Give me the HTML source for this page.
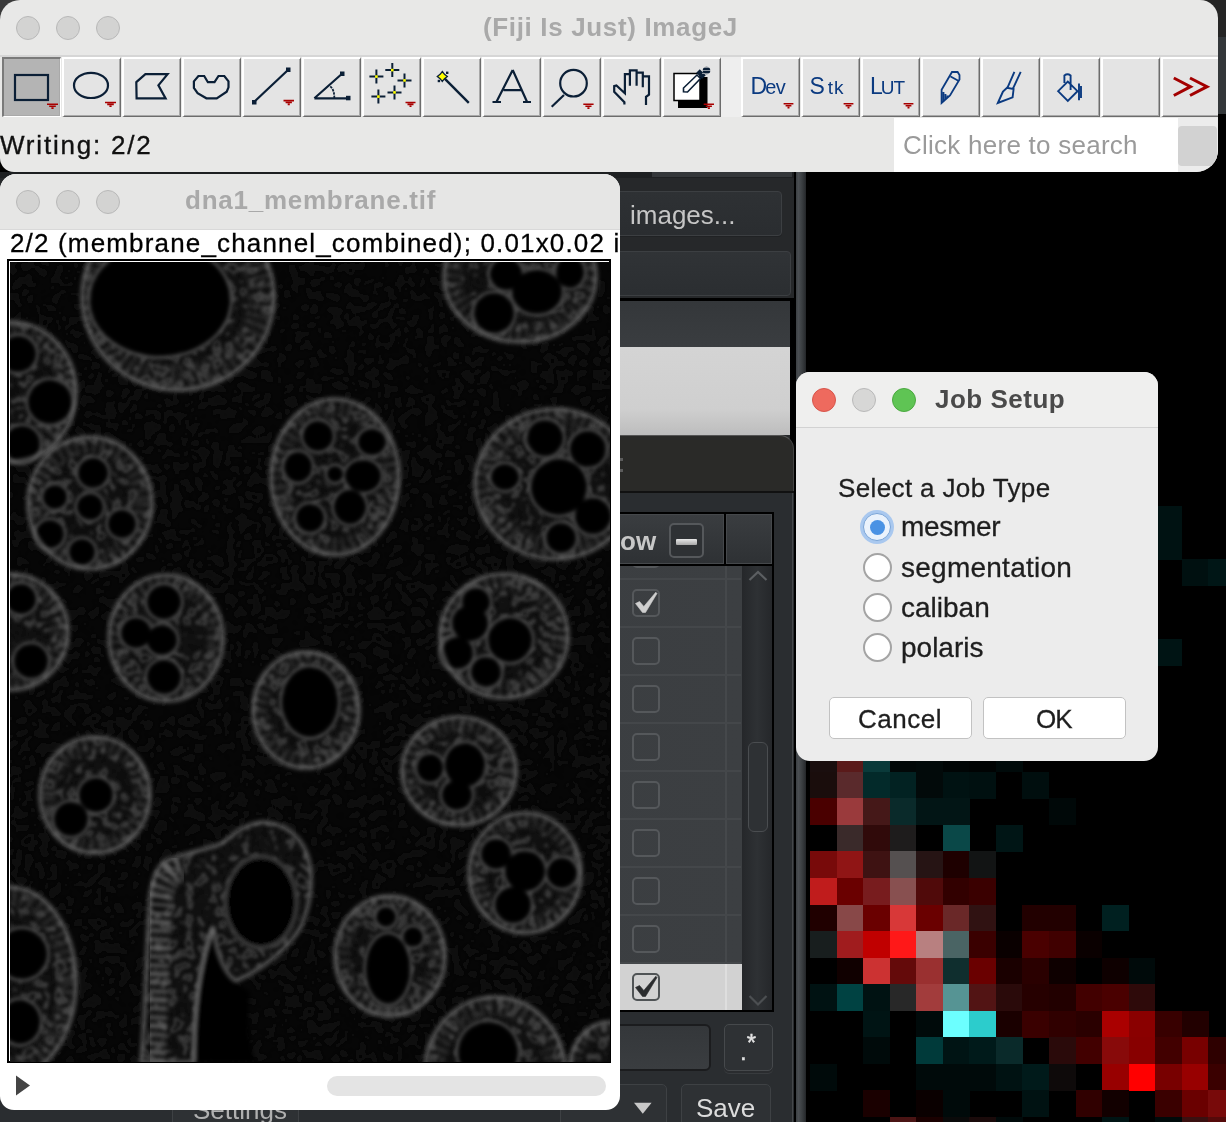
<!DOCTYPE html>
<html><head><meta charset="utf-8">
<style>
*{margin:0;padding:0;box-sizing:border-box}
body div{will-change:transform}
html,body{width:1226px;height:1122px;overflow:hidden;background:#000;font-family:"Liberation Sans",sans-serif}
.a{position:absolute}
.tb{position:absolute;top:57px;width:59px;height:60px;background:#e4e4e4;border-top:2.5px solid #fff;border-left:2px solid #fff;border-right:1px solid #6c6c6c;border-bottom:1px solid #6c6c6c;box-shadow:inset -1px -1px 0 #a9a9a9}
.tb svg{position:absolute;left:-2px;top:-2px}
#job div[id]{-webkit-text-stroke:0.3px #1e1e1e} #job #jtitle{-webkit-text-stroke:0}
.ck{position:absolute;left:632px;width:28px;height:28px;border:2px solid #55585b;border-radius:5px}
.rl{position:absolute;left:620px;width:121px;height:2px;background:#44474a}
</style></head><body>

<!-- backgrounds -->
<div class="a" style="left:0;top:0;width:40px;height:40px;background:#3a3a3a"></div>
<div class="a" style="left:1190px;top:0;width:36px;height:37px;background:#252525"></div>
<div class="a" style="left:1190px;top:37px;width:36px;height:77px;background:#33373a"></div>

<!-- dark app panel -->
<div class="a" id="dark" style="left:0;top:172px;width:794px;height:950px;background:#26282a"></div>
<div class="a" style="left:0;top:172px;width:794px;height:6px;background:#1e2022"></div>
<div class="a" style="left:652px;top:172px;width:140px;height:5px;background:#34373a"></div>
<div class="a" style="left:560px;top:191px;width:222px;height:45px;background:linear-gradient(#2e3134,#2a2d30);border:1px solid #3c3f42;border-radius:4px;box-shadow:0 1px 0 #202224"></div>
<div class="a" style="left:630px;top:199.5px;font-size:26px;line-height:30px;color:#c6c6c6">images...</div>
<div class="a" style="left:560px;top:251px;width:231px;height:45px;background:linear-gradient(#303336,#2b2e31);border:1px solid #3c3f42;border-radius:4px"></div>
<div class="a" style="left:0;top:298px;width:794px;height:3px;background:#000"></div>
<div class="a" style="left:0;top:301px;width:790px;height:46px;background:linear-gradient(#34373a,#3a3d40)"></div>
<div class="a" style="left:0;top:347px;width:790px;height:88px;background:linear-gradient(#d4d4d4,#cfcfcf 70%,#bdbdbd)"></div>
<div class="a" style="left:790px;top:301px;width:6px;height:821px;background:#000"></div>
<div class="a" style="z-index:1;left:792px;top:493px;width:1px;height:629px;background:#45484b"></div>
<div class="a" style="left:0;top:435px;width:794px;height:57px;background:#2a2a28;border-radius:0 14px 0 0;border-top:1px solid #555;border-right:1px solid #444"></div>
<div class="a" style="left:0;top:491px;width:794px;height:2px;background:#111"></div>
<div class="a" style="left:620px;top:458px;width:3px;height:3px;background:#5c5c5c"></div><div class="a" style="left:620px;top:469px;width:3px;height:3px;background:#5c5c5c"></div>
<div class="a" style="left:0;top:493px;width:794px;height:629px;background:#2a2d30"></div>
<div class="a" style="left:0;top:512px;width:774px;height:500px;background:#000"></div>
<div class="a" style="z-index:1;left:0;top:564px;width:774px;height:2px;background:#000"></div>
<div class="a" style="z-index:1;left:0;top:514px;width:724px;height:50px;background:linear-gradient(#3a3d40,#2e3134);border:1px solid #45484b"></div>
<div class="a" style="z-index:1;left:726px;top:514px;width:46px;height:50px;background:linear-gradient(#3a3d40,#2e3134);border:1px solid #45484b"></div>
<div class="a" style="z-index:1;left:620px;top:525.5px;font-weight:bold;font-size:26px;line-height:30px;color:#c8c8c8">ow</div>
<div class="a" style="z-index:1;left:669px;top:523px;width:35px;height:35px;border:2px solid #55585b;border-radius:5px;background:#2e3134"></div>
<div class="a" style="z-index:1;left:676px;top:539px;width:21px;height:6px;background:linear-gradient(#e8e8e8,#a8a8a8);border-radius:1px"></div>
<div class="a" style="left:0;top:566px;width:742px;height:444px;background:linear-gradient(90deg,#383b3e,#3c3f42)"></div>
<div class="a" style="left:742px;top:566px;width:30px;height:444px;background:linear-gradient(90deg,#25272a,#2e3134 50%,#25272a)"></div>
<div class="a" style="left:725px;top:566px;width:2px;height:444px;background:#45484b"></div>
<div class="rl" style="top:578px"></div>
<div class="rl" style="top:626px"></div>
<div class="rl" style="top:674px"></div>
<div class="rl" style="top:722px"></div>
<div class="rl" style="top:770px"></div>
<div class="rl" style="top:818px"></div>
<div class="rl" style="top:866px"></div>
<div class="rl" style="top:914px"></div>
<div class="rl" style="top:962px"></div>
<div class="ck" style="top:540px"></div>
<div class="ck" style="top:589px"></div>
<div class="ck" style="top:637px"></div>
<div class="ck" style="top:685px"></div>
<div class="ck" style="top:733px"></div>
<div class="ck" style="top:781px"></div>
<div class="ck" style="top:829px"></div>
<div class="ck" style="top:877px"></div>
<div class="ck" style="top:925px"></div>

<div class="a" style="left:0;top:964px;width:742px;height:46px;background:linear-gradient(90deg,#b8b8b8,#d2d2d2 40%,#d2d2d2)"></div>
<div class="a" style="left:725px;top:964px;width:2px;height:46px;background:#dedede"></div>
<div class="ck" style="top:973px;border-color:#505456"></div>
<svg class="a" style="left:0;top:0" width="794" height="1122" fill="none">
<polygon points="635.5,603.5 639.5,601.5 643.8,606.5 655.8,592.3 657,593.5 645.5,612.5 642.5,612.5" fill="#cfcfcf" stroke="#cfcfcf" stroke-width="0.6" stroke-linejoin="round"/>
<polygon points="635.5,987.5 639.5,985.5 643.8,990.5 655.8,976.3 657,977.5 645.5,996.5 642.5,996.5" fill="#2a2c2e" stroke="#2a2c2e" stroke-width="0.6" stroke-linejoin="round"/>
<path d="M749.5,580L758,572L766.5,580" stroke="#5c5f62" stroke-width="2.2"/>
<path d="M749.5,996L758,1004.5L766.5,996" stroke="#4c4f52" stroke-width="2.2"/>

</svg>
<div class="a" style="left:748px;top:742px;width:20px;height:90px;border:1.5px solid #4a4d50;border-radius:6px;background:#2e3134"></div>
<div class="a" style="left:560px;top:1024px;width:151px;height:47px;background:linear-gradient(#34373a,#3a3d40);border:2px solid #1b1c1e;border-radius:6px"></div>
<div class="a" style="left:724px;top:1024px;width:49px;height:47px;background:#2e3134;border:1.5px solid #46494c;border-radius:5px;box-shadow:0 2px 0 #2a2c2f,0 3px 0 #383b3e"></div>
<div class="a" style="left:740px;top:1039px;font-size:24px;line-height:26px;color:#e2e2e2;-webkit-text-stroke:0.4px #e2e2e2">.<span style="position:relative;top:-9px;left:0px">*</span></div>
<div class="a" style="left:172px;top:1084px;width:127px;height:40px;background:#2e3134;border:1.5px solid #3e4144;border-radius:5px 5px 0 0"></div>
<div class="a" id="sett" style="left:193px;top:1094.5px;font-size:26px;line-height:30px;color:#b0b0b0">Settings</div>
<div class="a" style="left:560px;top:1084px;width:107px;height:40px;background:#2e3134;border:1.5px solid #3e4144;border-radius:5px 5px 0 0"></div>
<div class="a" style="left:681px;top:1084px;width:90px;height:40px;background:#2e3134;border:1.5px solid #3e4144;border-radius:5px 5px 0 0"></div>
<svg class="a" style="left:0;top:0" width="794" height="1122"><path d="M634,1102.8H651.6L642.8,1113.7Z" fill="#c8c8c8"/></svg>
<div class="a" id="save" style="left:696px;top:1092.5px;font-size:26px;line-height:30px;color:#dcdcdc">Save</div>


<!-- gray strip -->
<div class="a" style="left:796px;top:172px;width:10px;height:950px;background:linear-gradient(90deg,#3c4043,#4a4e52 25%,#3a3e41 60%,#2a2d30 90%,#222426)"></div>

<!-- pixel image -->
<svg class="a" id="pix" style="left:0;top:0" width="1226" height="1122" shape-rendering="crispEdges"><rect x="810.0" y="745.2" width="26.85" height="26.85" fill="#1a0e0e"/><rect x="836.5" y="745.2" width="26.85" height="26.85" fill="#5a1a1a"/><rect x="863.1" y="745.2" width="26.85" height="26.85" fill="#0a3a3a"/><rect x="889.6" y="745.2" width="26.85" height="26.85" fill="#020808"/><rect x="916.2" y="745.2" width="26.85" height="26.85" fill="#020a0a"/><rect x="942.8" y="745.2" width="26.85" height="26.85" fill="#000505"/><rect x="969.3" y="745.2" width="26.85" height="26.85" fill="#000303"/><rect x="995.9" y="745.2" width="26.85" height="26.85" fill="#000a0a"/><rect x="810.0" y="771.7" width="26.85" height="26.85" fill="#1a0d0c"/><rect x="836.5" y="771.7" width="26.85" height="26.85" fill="#5a2a2c"/><rect x="863.1" y="771.7" width="26.85" height="26.85" fill="#032a2a"/><rect x="889.6" y="771.7" width="26.85" height="26.85" fill="#022222"/><rect x="916.2" y="771.7" width="26.85" height="26.85" fill="#020a0a"/><rect x="942.8" y="771.7" width="26.85" height="26.85" fill="#001212"/><rect x="969.3" y="771.7" width="26.85" height="26.85" fill="#001010"/><rect x="1022.4" y="771.7" width="26.85" height="26.85" fill="#000e0e"/><rect x="810.0" y="798.2" width="26.85" height="26.85" fill="#4a0000"/><rect x="836.5" y="798.2" width="26.85" height="26.85" fill="#9a3a3c"/><rect x="863.1" y="798.2" width="26.85" height="26.85" fill="#451818"/><rect x="889.6" y="798.2" width="26.85" height="26.85" fill="#0a2a2a"/><rect x="916.2" y="798.2" width="26.85" height="26.85" fill="#021515"/><rect x="942.8" y="798.2" width="26.85" height="26.85" fill="#021515"/><rect x="1049.0" y="798.2" width="26.85" height="26.85" fill="#000808"/><rect x="836.5" y="824.8" width="26.85" height="26.85" fill="#3a2a2a"/><rect x="863.1" y="824.8" width="26.85" height="26.85" fill="#300a0a"/><rect x="889.6" y="824.8" width="26.85" height="26.85" fill="#1e1c1c"/><rect x="942.8" y="824.8" width="26.85" height="26.85" fill="#0a4848"/><rect x="995.9" y="824.8" width="26.85" height="26.85" fill="#001515"/><rect x="810.0" y="851.4" width="26.85" height="26.85" fill="#780a0a"/><rect x="836.5" y="851.4" width="26.85" height="26.85" fill="#901515"/><rect x="863.1" y="851.4" width="26.85" height="26.85" fill="#3e1212"/><rect x="889.6" y="851.4" width="26.85" height="26.85" fill="#555050"/><rect x="916.2" y="851.4" width="26.85" height="26.85" fill="#261414"/><rect x="942.8" y="851.4" width="26.85" height="26.85" fill="#1e0000"/><rect x="969.3" y="851.4" width="26.85" height="26.85" fill="#121414"/><rect x="810.0" y="877.9" width="26.85" height="26.85" fill="#c01c1c"/><rect x="836.5" y="877.9" width="26.85" height="26.85" fill="#6a0000"/><rect x="863.1" y="877.9" width="26.85" height="26.85" fill="#781c1e"/><rect x="889.6" y="877.9" width="26.85" height="26.85" fill="#885050"/><rect x="916.2" y="877.9" width="26.85" height="26.85" fill="#500a0a"/><rect x="942.8" y="877.9" width="26.85" height="26.85" fill="#320000"/><rect x="969.3" y="877.9" width="26.85" height="26.85" fill="#3a0000"/><rect x="810.0" y="904.5" width="26.85" height="26.85" fill="#200000"/><rect x="836.5" y="904.5" width="26.85" height="26.85" fill="#884848"/><rect x="863.1" y="904.5" width="26.85" height="26.85" fill="#6a0000"/><rect x="889.6" y="904.5" width="26.85" height="26.85" fill="#d83838"/><rect x="916.2" y="904.5" width="26.85" height="26.85" fill="#6a0000"/><rect x="942.8" y="904.5" width="26.85" height="26.85" fill="#6a2828"/><rect x="969.3" y="904.5" width="26.85" height="26.85" fill="#301212"/><rect x="1022.4" y="904.5" width="26.85" height="26.85" fill="#220000"/><rect x="1049.0" y="904.5" width="26.85" height="26.85" fill="#220000"/><rect x="1102.0" y="904.5" width="26.85" height="26.85" fill="#002020"/><rect x="810.0" y="931.0" width="26.85" height="26.85" fill="#181e1e"/><rect x="836.5" y="931.0" width="26.85" height="26.85" fill="#a01c1e"/><rect x="863.1" y="931.0" width="26.85" height="26.85" fill="#c00000"/><rect x="889.6" y="931.0" width="26.85" height="26.85" fill="#ff1818"/><rect x="916.2" y="931.0" width="26.85" height="26.85" fill="#b88080"/><rect x="942.8" y="931.0" width="26.85" height="26.85" fill="#4a6464"/><rect x="969.3" y="931.0" width="26.85" height="26.85" fill="#3a0000"/><rect x="995.9" y="931.0" width="26.85" height="26.85" fill="#0a0000"/><rect x="1022.4" y="931.0" width="26.85" height="26.85" fill="#4a0000"/><rect x="1049.0" y="931.0" width="26.85" height="26.85" fill="#400000"/><rect x="1075.5" y="931.0" width="26.85" height="26.85" fill="#0a0000"/><rect x="836.5" y="957.6" width="26.85" height="26.85" fill="#100000"/><rect x="863.1" y="957.6" width="26.85" height="26.85" fill="#cc3232"/><rect x="889.6" y="957.6" width="26.85" height="26.85" fill="#640a0a"/><rect x="916.2" y="957.6" width="26.85" height="26.85" fill="#9a3030"/><rect x="942.8" y="957.6" width="26.85" height="26.85" fill="#0f2e2e"/><rect x="969.3" y="957.6" width="26.85" height="26.85" fill="#6a0000"/><rect x="995.9" y="957.6" width="26.85" height="26.85" fill="#1a0000"/><rect x="1022.4" y="957.6" width="26.85" height="26.85" fill="#2a0000"/><rect x="1049.0" y="957.6" width="26.85" height="26.85" fill="#0e0000"/><rect x="1102.0" y="957.6" width="26.85" height="26.85" fill="#0e0000"/><rect x="1128.6" y="957.6" width="26.85" height="26.85" fill="#000a0a"/><rect x="810.0" y="984.1" width="26.85" height="26.85" fill="#001212"/><rect x="836.5" y="984.1" width="26.85" height="26.85" fill="#004242"/><rect x="863.1" y="984.1" width="26.85" height="26.85" fill="#001212"/><rect x="889.6" y="984.1" width="26.85" height="26.85" fill="#282828"/><rect x="916.2" y="984.1" width="26.85" height="26.85" fill="#a23c3c"/><rect x="942.8" y="984.1" width="26.85" height="26.85" fill="#569494"/><rect x="969.3" y="984.1" width="26.85" height="26.85" fill="#521414"/><rect x="995.9" y="984.1" width="26.85" height="26.85" fill="#2a0a0a"/><rect x="1022.4" y="984.1" width="26.85" height="26.85" fill="#260000"/><rect x="1049.0" y="984.1" width="26.85" height="26.85" fill="#220000"/><rect x="1075.5" y="984.1" width="26.85" height="26.85" fill="#420000"/><rect x="1102.0" y="984.1" width="26.85" height="26.85" fill="#4a0000"/><rect x="1128.6" y="984.1" width="26.85" height="26.85" fill="#2e0a0a"/><rect x="863.1" y="1010.7" width="26.85" height="26.85" fill="#001414"/><rect x="916.2" y="1010.7" width="26.85" height="26.85" fill="#000a0a"/><rect x="942.8" y="1010.7" width="26.85" height="26.85" fill="#6cffff"/><rect x="969.3" y="1010.7" width="26.85" height="26.85" fill="#2ccccc"/><rect x="995.9" y="1010.7" width="26.85" height="26.85" fill="#1a0000"/><rect x="1022.4" y="1010.7" width="26.85" height="26.85" fill="#3a0000"/><rect x="1049.0" y="1010.7" width="26.85" height="26.85" fill="#300000"/><rect x="1075.5" y="1010.7" width="26.85" height="26.85" fill="#2a0000"/><rect x="1102.0" y="1010.7" width="26.85" height="26.85" fill="#aa0000"/><rect x="1128.6" y="1010.7" width="26.85" height="26.85" fill="#8a0000"/><rect x="1155.2" y="1010.7" width="26.85" height="26.85" fill="#380000"/><rect x="1181.7" y="1010.7" width="26.85" height="26.85" fill="#220000"/><rect x="863.1" y="1037.2" width="26.85" height="26.85" fill="#000a0a"/><rect x="916.2" y="1037.2" width="26.85" height="26.85" fill="#003a3a"/><rect x="942.8" y="1037.2" width="26.85" height="26.85" fill="#001414"/><rect x="969.3" y="1037.2" width="26.85" height="26.85" fill="#001a1a"/><rect x="995.9" y="1037.2" width="26.85" height="26.85" fill="#0a2a2a"/><rect x="1049.0" y="1037.2" width="26.85" height="26.85" fill="#2a0a0a"/><rect x="1075.5" y="1037.2" width="26.85" height="26.85" fill="#420000"/><rect x="1102.0" y="1037.2" width="26.85" height="26.85" fill="#880a0a"/><rect x="1128.6" y="1037.2" width="26.85" height="26.85" fill="#880000"/><rect x="1155.2" y="1037.2" width="26.85" height="26.85" fill="#420000"/><rect x="1181.7" y="1037.2" width="26.85" height="26.85" fill="#780000"/><rect x="1208.2" y="1037.2" width="26.85" height="26.85" fill="#2e0000"/><rect x="810.0" y="1063.8" width="26.85" height="26.85" fill="#000a0a"/><rect x="916.2" y="1063.8" width="26.85" height="26.85" fill="#000a0a"/><rect x="942.8" y="1063.8" width="26.85" height="26.85" fill="#000a0a"/><rect x="969.3" y="1063.8" width="26.85" height="26.85" fill="#000a0a"/><rect x="995.9" y="1063.8" width="26.85" height="26.85" fill="#001212"/><rect x="1022.4" y="1063.8" width="26.85" height="26.85" fill="#001a1a"/><rect x="1049.0" y="1063.8" width="26.85" height="26.85" fill="#0e0a0a"/><rect x="1102.0" y="1063.8" width="26.85" height="26.85" fill="#980000"/><rect x="1128.6" y="1063.8" width="26.85" height="26.85" fill="#ff0000"/><rect x="1155.2" y="1063.8" width="26.85" height="26.85" fill="#780000"/><rect x="1181.7" y="1063.8" width="26.85" height="26.85" fill="#980000"/><rect x="1208.2" y="1063.8" width="26.85" height="26.85" fill="#3a0000"/><rect x="863.1" y="1090.3" width="26.85" height="26.85" fill="#1a0000"/><rect x="916.2" y="1090.3" width="26.85" height="26.85" fill="#0a0000"/><rect x="942.8" y="1090.3" width="26.85" height="26.85" fill="#000a0a"/><rect x="1022.4" y="1090.3" width="26.85" height="26.85" fill="#001212"/><rect x="1075.5" y="1090.3" width="26.85" height="26.85" fill="#300000"/><rect x="1102.0" y="1090.3" width="26.85" height="26.85" fill="#120000"/><rect x="1155.2" y="1090.3" width="26.85" height="26.85" fill="#3a0000"/><rect x="1181.7" y="1090.3" width="26.85" height="26.85" fill="#6a0000"/><rect x="1208.2" y="1090.3" width="26.85" height="26.85" fill="#780a0a"/><rect x="889.6" y="1116.9" width="26.85" height="26.85" fill="#4a1414"/><rect x="916.2" y="1116.9" width="26.85" height="26.85" fill="#1a0000"/><rect x="942.8" y="1116.9" width="26.85" height="26.85" fill="#0a0a0a"/><rect x="969.3" y="1116.9" width="26.85" height="26.85" fill="#1a0a0a"/><rect x="995.9" y="1116.9" width="26.85" height="26.85" fill="#000a0a"/><rect x="1102.0" y="1116.9" width="26.85" height="26.85" fill="#001414"/><rect x="1155.2" y="1116.9" width="26.85" height="26.85" fill="#000a0a"/><rect x="1181.7" y="1116.9" width="26.85" height="26.85" fill="#3a1010"/><rect x="1208.2" y="1116.9" width="26.85" height="26.85" fill="#550a0a"/><rect x="1155.2" y="506.2" width="26.85" height="26.85" fill="#001212"/><rect x="1155.2" y="532.8" width="26.85" height="26.85" fill="#001212"/><rect x="1181.7" y="559.3" width="26.85" height="26.85" fill="#001010"/><rect x="1208.2" y="559.3" width="26.85" height="26.85" fill="#001616"/><rect x="1155.2" y="639.0" width="26.85" height="26.85" fill="#001414"/></svg>

<!-- main window -->
<div class="a" id="main" style="z-index:3;left:0;top:0;width:1218px;height:172px;background:#e8e8e7;border-radius:20px 18px 22px 14px;overflow:hidden">
<div class="a" style="left:16px;top:16px;width:24px;height:24px;border-radius:50%;background:#d3d3d2;border:1px solid #b8b8b8"></div>
<div class="a" style="left:56px;top:16px;width:24px;height:24px;border-radius:50%;background:#d3d3d2;border:1px solid #b8b8b8"></div>
<div class="a" style="left:96px;top:16px;width:24px;height:24px;border-radius:50%;background:#d3d3d2;border:1px solid #b8b8b8"></div>
<div class="a" id="title" style="left:483px;top:12px;font-weight:bold;font-size:26px;color:#a9a9a9;line-height:30px;letter-spacing:0.65px;white-space:nowrap">(Fiji Is Just) ImageJ</div>
<div class="a" style="left:0;top:55px;width:1218px;height:2px;background:#d6d6d6"></div>
<div class="a" style="left:720px;top:57px;width:21px;height:60px;background:#eeeeee"></div>
<div class="tb" style="left:2px;background:#b4b4b4;border-top-color:#7a7a7a;border-left-color:#7a7a7a;border-right-color:#fff;border-bottom-color:#fff"></div>
<div class="tb" style="left:62px"></div>
<div class="tb" style="left:122px"></div>
<div class="tb" style="left:182px"></div>
<div class="tb" style="left:242px"></div>
<div class="tb" style="left:302px"></div>
<div class="tb" style="left:362px"></div>
<div class="tb" style="left:422px"></div>
<div class="tb" style="left:482px"></div>
<div class="tb" style="left:542px"></div>
<div class="tb" style="left:602px"></div>
<div class="tb" style="left:662px"></div>
<div class="tb" style="left:741px"></div>
<div class="tb" style="left:801px"></div>
<div class="tb" style="left:861px"></div>
<div class="tb" style="left:921px"></div>
<div class="tb" style="left:981px"></div>
<div class="tb" style="left:1041px"></div>
<div class="tb" style="left:1101px"></div>
<div class="tb" style="left:1161px"></div>

<div class="a" id="writ" style="left:0;top:130px;font-size:26px;line-height:30px;color:#111;-webkit-text-stroke:0.35px #111;letter-spacing:1.8px">Writing: 2/2</div>
<div class="a" style="left:894px;top:118px;width:284px;height:54px;background:#fff"></div>
<div class="a" id="srch" style="left:903px;top:130px;font-size:26px;line-height:30px;color:#9a9a9a;letter-spacing:0.25px">Click here to search</div>
<div class="a" style="left:1178px;top:118px;width:40px;height:54px;background:#ececec"></div>
<div class="a" style="left:1178px;top:126px;width:39px;height:40px;background:#d2d2d2;border-radius:4px"></div>
<svg class="a" style="left:0;top:0" width="1218" height="172" fill="none" stroke-linejoin="miter">
<rect x="15" y="75" width="33" height="25" stroke="#0b1f36" stroke-width="2.2"/>
<path d="M47.0,104.3H58.0M49.2,106.2H55.8M51.4,108.1H53.6" stroke="#a80000" stroke-width="1.6"/>
<ellipse cx="91" cy="85.4" rx="17" ry="12.6" stroke="#0b1f36" stroke-width="2.2"/>
<path d="M105.0,102.5H116.0M107.2,104.4H113.8M109.4,106.3H111.6" stroke="#a80000" stroke-width="1.6"/>
<polygon points="136.3,82.2 145.4,74.2 167.6,74.2 158.4,85.4 165.6,98.4 136.6,98.4" stroke="#0b1f36" stroke-width="2.2"/>
<polygon points="193.9,81.4 198.4,76 204.2,76 207.9,82.2 214.5,82.2 218.5,76 224.3,76 228.5,81.4 228.5,87.3 226.7,91.7 216.7,98.3 206.4,98.3 197.6,93.2 193.9,88" stroke="#0b1f36" stroke-width="2.2"/>
<line x1="254" y1="102" x2="288" y2="70" stroke="#0b1f36" stroke-width="2.2"/>
<rect x="252" y="100" width="4.5" height="4.5" fill="#0b1f36"/><rect x="286" y="67.5" width="4.5" height="4.5" fill="#0b1f36"/>
<path d="M283.5,100.6H294.0M285.6,102.5H291.9M287.7,104.4H289.8" stroke="#a80000" stroke-width="1.6"/>
<path d="M314.4,98.3L342,73.8M314.4,98.3H348" stroke="#0b1f36" stroke-width="2.2"/>
<rect x="340" y="71.5" width="4.5" height="4.5" fill="#0b1f36"/><rect x="346" y="95.8" width="4.5" height="4.5" fill="#0b1f36"/>
<path d="M330.3,86.4Q334.5,90 334.3,98.3" stroke="#0b1f36" stroke-width="1.8" stroke-dasharray="2.5,1"/>
<path d="M369.4,76.6H383.4M376.4,69.6V83.6" stroke="#0b1f36" stroke-width="2"/><rect x="375.09999999999997" y="75.3" width="2.6" height="2.6" fill="#ffff00"/><path d="M385.3,70.1H399.3M392.3,63.099999999999994V77.1" stroke="#0b1f36" stroke-width="2"/><rect x="391.0" y="68.8" width="2.6" height="2.6" fill="#ffff00"/><path d="M397.5,80.4H411.5M404.5,73.4V87.4" stroke="#0b1f36" stroke-width="2"/><rect x="403.2" y="79.10000000000001" width="2.6" height="2.6" fill="#ffff00"/><path d="M371.4,96.6H385.4M378.4,89.6V103.6" stroke="#0b1f36" stroke-width="2"/><rect x="377.09999999999997" y="95.3" width="2.6" height="2.6" fill="#ffff00"/><path d="M387.5,92.4H401.5M394.5,85.4V99.4" stroke="#0b1f36" stroke-width="2"/><rect x="393.2" y="91.10000000000001" width="2.6" height="2.6" fill="#ffff00"/>
<path d="M405.5,102.5H415.5M407.5,104.4H413.5M409.5,106.3H411.5" stroke="#a80000" stroke-width="1.6"/>
<line x1="444.7" y1="78.7" x2="468.8" y2="102.8" stroke="#0b1f36" stroke-width="2.4"/>
<path d="M442.3,71.5L444.5,74.3L447.3,76.5L444.5,78.7L442.3,81.5L440.1,78.7L437.3,76.5L440.1,74.3Z" fill="#ffff00" stroke="#0b1f36" stroke-width="1.3"/><rect x="446" y="71.6" width="2.4" height="2.4" fill="#0b1f36"/><rect x="437.7" y="79.8" width="2.4" height="2.4" fill="#0b1f36"/>
<path d="M512.7,70L496.5,101.8M512.7,70L527,101.8M503.6,90.2H521M492.5,102H501M523,102H531" stroke="#0b1f36" stroke-width="2.2"/>
<circle cx="573.5" cy="83.2" r="13.3" stroke="#0b1f36" stroke-width="2.2"/>
<line x1="564" y1="95" x2="551.7" y2="106.7" stroke="#0b1f36" stroke-width="2.2"/>
<path d="M583.3,104.3H593.6M585.4,106.2H591.5M587.4,108.1H589.5" stroke="#a80000" stroke-width="1.6"/>
<path d="M624.4,104.6V102.3L614.2,91.7V86.1L616.4,85.5L624.9,93.2V74.1H629.9V85.8M629.9,74.1V70.4H636.6V85.8M636.6,72.6H642.8V87.3M642.8,76.3H649V94.6L646,96.8V104.9" stroke="#0b1f36" stroke-width="2.2"/>
<rect x="678" y="77" width="29.5" height="31" fill="#000"/>
<rect x="674" y="73.5" width="26" height="27" fill="#fff" stroke="#000" stroke-width="1.5"/>
<path d="M683.5,91.8L683.5,88L697,75L700.5,78.5L687.5,92Z" fill="#fff" stroke="#0b1f36" stroke-width="1.6"/>
<path d="M698,71L704,77" stroke="#0b1f36" stroke-width="5"/>
<circle cx="706.5" cy="70.5" r="3.8" fill="#0b1f36"/>
<path d="M702,67.5h8M702,70.5h9M702,73.5h8" stroke="#e4e4e4" stroke-width="0.6"/>
<path d="M703.7,104.3H714.0M705.8,106.2H711.9M707.8,108.1H709.9" stroke="#a80000" stroke-width="1.6"/>
<text x="750.5" y="93.8" fill="#0b3a80" stroke="none" font-size="23" font-family="Liberation Sans" stroke="#0b3a80" stroke-width="0.5" letter-spacing="-2">D<tspan font-size="20" letter-spacing="-0.5">ev</tspan></text>
<path d="M783.6,103.8H793.4M785.6,105.7H791.4M787.5,107.6H789.5" stroke="#a80000" stroke-width="1.6"/>
<text x="809.5" y="93.8" fill="#0b3a80" stroke="none" font-size="23" font-family="Liberation Sans" stroke="#0b3a80" stroke-width="0.5">S<tspan font-size="19" dx="3" letter-spacing="1">tk</tspan></text>
<path d="M843.6,103.8H853.4M845.6,105.7H851.4M847.5,107.6H849.5" stroke="#a80000" stroke-width="1.6"/>
<text x="870" y="93.8" fill="#0b3a80" stroke="none" font-size="23" font-family="Liberation Sans" stroke="#0b3a80" stroke-width="0.5" letter-spacing="-2">L<tspan font-size="19" letter-spacing="-1">UT</tspan></text>
<path d="M903.6,103.8H913.4M905.6,105.7H911.4M907.5,107.6H909.5" stroke="#a80000" stroke-width="1.6"/>
<path d="M941.6,103L941.6,89.8L952,72L957.6,72L959.5,75L959.5,79.5L950,95.5Z M950.6,76.5L958.3,80.8 M943.5,92V101M945.5,94V99.5M947.5,95.5V98" stroke="#0b3a80" stroke-width="1.8"/>
<path d="M1014.4,71.8L1007.5,87.7M1020.7,71.8L1012.4,89.8M1003,91.5L997.8,103L1012.6,97.4L1013.6,89L1007,87.7Z" stroke="#0b3a80" stroke-width="1.9"/>
<path d="M1058.1,91.2L1067.8,100.9L1077.5,91.2L1067.8,81.5Z M1064.4,83V75.5Q1067.5,73 1070.6,75.5V90 M1079,83.6V100.2M1081,86V98" stroke="#0b3a80" stroke-width="1.9"/>
<path d="M1173.8,78L1190.5,86.7L1173.8,95.5M1190,78L1207,86.7L1190,95.5" stroke="#a30000" stroke-width="3"/>
</svg>
</div>

<!-- dna1 window -->
<div class="a" id="dna" style="z-index:3;left:0;top:174px;width:620px;height:936px;background:#fff;border-radius:16px 16px 14px 14px;overflow:hidden">
<div class="a" style="left:0;top:0;width:620px;height:56px;background:#e6e6e5;border-bottom:1px solid #d9d9d9"></div>
<div class="a" style="left:16px;top:16px;width:24px;height:24px;border-radius:50%;background:#d3d3d2;border:1px solid #b8b8b8"></div>
<div class="a" style="left:56px;top:16px;width:24px;height:24px;border-radius:50%;background:#d3d3d2;border:1px solid #b8b8b8"></div>
<div class="a" style="left:96px;top:16px;width:24px;height:24px;border-radius:50%;background:#d3d3d2;border:1px solid #b8b8b8"></div>
<div class="a" id="dtitle" style="left:185px;top:11px;font-weight:bold;font-size:26px;line-height:30px;color:#a9a9a9;white-space:nowrap;letter-spacing:0.75px">dna1_membrane.tif</div>
<div class="a" id="sub" style="left:10px;top:54px;font-size:26px;line-height:30px;color:#000;white-space:nowrap;letter-spacing:1.16px;-webkit-text-stroke:0.3px #000">2/2 (membrane_channel_combined); 0.01x0.02 i</div>
<div class="a" style="left:7px;top:85px;width:604px;height:804px;background:#000"></div>
<div class="a" style="left:9px;top:87px;width:600px;height:1px;background:#fff"></div>
<div class="a" style="left:9px;top:87px;width:1px;height:800px;background:#fff"></div>
<svg class="a" id="img" style="left:10px;top:88px" width="600" height="800">
<defs>
<filter id="bgm" x="0" y="0" width="600" height="800" filterUnits="userSpaceOnUse">
<feTurbulence type="fractalNoise" baseFrequency="0.075" numOctaves="2" seed="11" result="t"/>
<feColorMatrix in="t" type="matrix" values="0 0 0 0 0  0 0 0 0 0  0 0 0 0 0  1 0 0 0 0" result="a"/>
<feComponentTransfer in="a" result="l"><feFuncA type="table" tableValues="0 0 0.1 0.5 1 0.5 0.1 0 0.1 0.5 1 0.5 0.1 0 0"/></feComponentTransfer>
<feFlood flood-color="#111111"/>
<feComposite in2="l" operator="in" result="lines"/>
<feComposite in="lines" in2="SourceAlpha" operator="in"/>
<feGaussianBlur stdDeviation="1.8"/>
</filter>
<filter id="cm" x="0" y="0" width="600" height="800" filterUnits="userSpaceOnUse">
<feTurbulence type="fractalNoise" baseFrequency="0.07" numOctaves="2" seed="5" result="t"/>
<feColorMatrix in="t" type="matrix" values="0 0 0 0 0  0 0 0 0 0  0 0 0 0 0  1 0 0 0 0" result="a"/>
<feComponentTransfer in="a" result="l"><feFuncA type="table" tableValues="0 0 0.1 0.9 0.1 0 0.1 0.9 0.1 0 0"/></feComponentTransfer>
<feFlood flood-color="#444444"/>
<feComposite in2="l" operator="in" result="lines"/>
<feComposite in="lines" in2="SourceAlpha" operator="in"/>
<feGaussianBlur stdDeviation="1.6"/>
</filter>
<filter id="bb" x="-5%" y="-5%" width="110%" height="110%"><feGaussianBlur stdDeviation="1.9"/></filter>
<filter id="bh" x="-20%" y="-20%" width="140%" height="140%"><feGaussianBlur stdDeviation="2"/></filter>
</defs>
<rect width="600" height="800" fill="#060606"/>
<rect width="600" height="800" fill="#fff" filter="url(#bgm)"/>
<g fill="#0f0f0f" filter="url(#bb)"><ellipse cx="168" cy="35" rx="96" ry="93"/><ellipse cx="0" cy="130" rx="66" ry="70"/><ellipse cx="80" cy="241" rx="62" ry="66"/><ellipse cx="325" cy="215" rx="64" ry="78"/><ellipse cx="510" cy="15" rx="76" ry="65"/><ellipse cx="545" cy="222" rx="80" ry="75"/><ellipse cx="0" cy="370" rx="58" ry="58"/><ellipse cx="156" cy="376" rx="57" ry="63"/><ellipse cx="85" cy="533" rx="55" ry="58"/><ellipse cx="296" cy="448" rx="53" ry="58"/><ellipse cx="494" cy="374" rx="64" ry="62"/><ellipse cx="449" cy="509" rx="57" ry="54"/><ellipse cx="0" cy="720" rx="66" ry="95"/><ellipse cx="380" cy="694" rx="55" ry="60"/><ellipse cx="515" cy="611" rx="56" ry="60"/><ellipse cx="485" cy="810" rx="70" ry="75"/><ellipse cx="600" cy="805" rx="40" ry="45"/><path d="M131,800 C136,740 136,690 140,633 C144,610 150,600 160,597 C180,590 200,586 210,582 C222,575 230,563 252,560 C272,560 290,572 297,592 C304,612 302,640 291,665 C280,684 256,706 226,719 C214,712 206,690 203,665 C194,690 184,730 184,800 Z"/></g>
<g fill="#fff" filter="url(#cm)"><ellipse cx="168" cy="35" rx="96" ry="93"/><ellipse cx="0" cy="130" rx="66" ry="70"/><ellipse cx="80" cy="241" rx="62" ry="66"/><ellipse cx="325" cy="215" rx="64" ry="78"/><ellipse cx="510" cy="15" rx="76" ry="65"/><ellipse cx="545" cy="222" rx="80" ry="75"/><ellipse cx="0" cy="370" rx="58" ry="58"/><ellipse cx="156" cy="376" rx="57" ry="63"/><ellipse cx="85" cy="533" rx="55" ry="58"/><ellipse cx="296" cy="448" rx="53" ry="58"/><ellipse cx="494" cy="374" rx="64" ry="62"/><ellipse cx="449" cy="509" rx="57" ry="54"/><ellipse cx="0" cy="720" rx="66" ry="95"/><ellipse cx="380" cy="694" rx="55" ry="60"/><ellipse cx="515" cy="611" rx="56" ry="60"/><ellipse cx="485" cy="810" rx="70" ry="75"/><ellipse cx="600" cy="805" rx="40" ry="45"/><path d="M131,800 C136,740 136,690 140,633 C144,610 150,600 160,597 C180,590 200,586 210,582 C222,575 230,563 252,560 C272,560 290,572 297,592 C304,612 302,640 291,665 C280,684 256,706 226,719 C214,712 206,690 203,665 C194,690 184,730 184,800 Z"/></g>
<g fill="none" stroke="#5a5a5a" stroke-dasharray="3 5 4 6 3 5 4 5" filter="url(#bb)" opacity="0.45"><ellipse cx="168" cy="35" rx="82.98" ry="79.98" stroke-width="26.040000000000003"/><ellipse cx="0" cy="130" rx="56.76" ry="60.76" stroke-width="18.48"/><ellipse cx="80" cy="241" rx="53.32" ry="57.32" stroke-width="17.360000000000003"/><ellipse cx="325" cy="215" rx="55.04" ry="69.03999999999999" stroke-width="17.92"/><ellipse cx="510" cy="15" rx="66.9" ry="55.9" stroke-width="18.200000000000003"/><ellipse cx="545" cy="222" rx="69.5" ry="64.5" stroke-width="21.000000000000004"/><ellipse cx="0" cy="370" rx="49.879999999999995" ry="49.879999999999995" stroke-width="16.240000000000002"/><ellipse cx="156" cy="376" rx="49.019999999999996" ry="55.019999999999996" stroke-width="15.96"/><ellipse cx="85" cy="533" rx="47.3" ry="50.3" stroke-width="15.400000000000002"/><ellipse cx="296" cy="448" rx="45.58" ry="50.58" stroke-width="14.840000000000002"/><ellipse cx="494" cy="374" rx="55.32" ry="53.32" stroke-width="17.360000000000003"/><ellipse cx="449" cy="509" rx="49.44" ry="46.44" stroke-width="15.120000000000001"/><ellipse cx="0" cy="720" rx="56.76" ry="85.76" stroke-width="18.48"/><ellipse cx="380" cy="694" rx="47.3" ry="52.3" stroke-width="15.400000000000002"/><ellipse cx="515" cy="611" rx="48.16" ry="52.16" stroke-width="15.680000000000001"/><ellipse cx="485" cy="810" rx="60.2" ry="65.2" stroke-width="19.6"/><ellipse cx="600" cy="805" rx="34.4" ry="39.4" stroke-width="11.200000000000001"/></g>
<g fill="none" stroke="#575757" stroke-width="4.5" filter="url(#bb)"><ellipse cx="150" cy="38" rx="70" ry="56"/><ellipse cx="40" cy="140" rx="22" ry="22"/><ellipse cx="12" cy="182" rx="18" ry="18"/><ellipse cx="8" cy="92" rx="18" ry="18"/><ellipse cx="83" cy="211" rx="15" ry="15"/><ellipse cx="45" cy="235" rx="12" ry="12"/><ellipse cx="80" cy="245" rx="13" ry="13"/><ellipse cx="40" cy="272" rx="14" ry="14"/><ellipse cx="112" cy="262" rx="14" ry="14"/><ellipse cx="72" cy="290" rx="13" ry="13"/><ellipse cx="353" cy="214" rx="18" ry="16"/><ellipse cx="340" cy="245" rx="16" ry="17"/><ellipse cx="308" cy="174" rx="15" ry="15"/><ellipse cx="288" cy="205" rx="14" ry="15"/><ellipse cx="300" cy="256" rx="14" ry="14"/><ellipse cx="362" cy="180" rx="14" ry="13"/><ellipse cx="325" cy="212" rx="8" ry="8"/><ellipse cx="484" cy="51" rx="20" ry="20"/><ellipse cx="527" cy="30" rx="25" ry="22"/><ellipse cx="496" cy="12" rx="16" ry="16"/><ellipse cx="560" cy="10" rx="14" ry="16"/><ellipse cx="535" cy="176" rx="18" ry="18"/><ellipse cx="578" cy="187" rx="18" ry="18"/><ellipse cx="549" cy="225" rx="28" ry="28"/><ellipse cx="583" cy="254" rx="18" ry="18"/><ellipse cx="551" cy="276" rx="15" ry="15"/><ellipse cx="495" cy="215" rx="14" ry="13"/><ellipse cx="11" cy="337" rx="15" ry="15"/><ellipse cx="21" cy="399" rx="17" ry="17"/><ellipse cx="154" cy="340" rx="17" ry="17"/><ellipse cx="126" cy="371" rx="15" ry="15"/><ellipse cx="152" cy="378" rx="15" ry="15"/><ellipse cx="154" cy="415" rx="17" ry="17"/><ellipse cx="86" cy="533" rx="17" ry="17"/><ellipse cx="61" cy="557" rx="17" ry="17"/><ellipse cx="300" cy="440" rx="28" ry="35"/><ellipse cx="460" cy="361" rx="18" ry="18"/><ellipse cx="500" cy="378" rx="22" ry="22"/><ellipse cx="447" cy="391" rx="16" ry="16"/><ellipse cx="476" cy="410" rx="15" ry="15"/><ellipse cx="466" cy="340" rx="14" ry="14"/><ellipse cx="455" cy="503" rx="20" ry="22"/><ellipse cx="447" cy="533" rx="15" ry="15"/><ellipse cx="420" cy="506" rx="13" ry="14"/><ellipse cx="12" cy="692" rx="25" ry="25"/><ellipse cx="10" cy="760" rx="20" ry="22"/><ellipse cx="378" cy="707" rx="22" ry="35"/><ellipse cx="376" cy="655" rx="10" ry="10"/><ellipse cx="403" cy="675" rx="10" ry="10"/><ellipse cx="515" cy="609" rx="20" ry="20"/><ellipse cx="552" cy="611" rx="15" ry="15"/><ellipse cx="503" cy="643" rx="18" ry="18"/><ellipse cx="486" cy="592" rx="15" ry="15"/><ellipse cx="478" cy="790" rx="30" ry="30"/></g>
<g fill="#000" filter="url(#bb)"><ellipse cx="150" cy="38" rx="70" ry="56"/><ellipse cx="40" cy="140" rx="22" ry="22"/><ellipse cx="12" cy="182" rx="18" ry="18"/><ellipse cx="8" cy="92" rx="18" ry="18"/><ellipse cx="83" cy="211" rx="15" ry="15"/><ellipse cx="45" cy="235" rx="12" ry="12"/><ellipse cx="80" cy="245" rx="13" ry="13"/><ellipse cx="40" cy="272" rx="14" ry="14"/><ellipse cx="112" cy="262" rx="14" ry="14"/><ellipse cx="72" cy="290" rx="13" ry="13"/><ellipse cx="353" cy="214" rx="18" ry="16"/><ellipse cx="340" cy="245" rx="16" ry="17"/><ellipse cx="308" cy="174" rx="15" ry="15"/><ellipse cx="288" cy="205" rx="14" ry="15"/><ellipse cx="300" cy="256" rx="14" ry="14"/><ellipse cx="362" cy="180" rx="14" ry="13"/><ellipse cx="325" cy="212" rx="8" ry="8"/><ellipse cx="484" cy="51" rx="20" ry="20"/><ellipse cx="527" cy="30" rx="25" ry="22"/><ellipse cx="496" cy="12" rx="16" ry="16"/><ellipse cx="560" cy="10" rx="14" ry="16"/><ellipse cx="535" cy="176" rx="18" ry="18"/><ellipse cx="578" cy="187" rx="18" ry="18"/><ellipse cx="549" cy="225" rx="28" ry="28"/><ellipse cx="583" cy="254" rx="18" ry="18"/><ellipse cx="551" cy="276" rx="15" ry="15"/><ellipse cx="495" cy="215" rx="14" ry="13"/><ellipse cx="11" cy="337" rx="15" ry="15"/><ellipse cx="21" cy="399" rx="17" ry="17"/><ellipse cx="154" cy="340" rx="17" ry="17"/><ellipse cx="126" cy="371" rx="15" ry="15"/><ellipse cx="152" cy="378" rx="15" ry="15"/><ellipse cx="154" cy="415" rx="17" ry="17"/><ellipse cx="86" cy="533" rx="17" ry="17"/><ellipse cx="61" cy="557" rx="17" ry="17"/><ellipse cx="300" cy="440" rx="28" ry="35"/><ellipse cx="460" cy="361" rx="18" ry="18"/><ellipse cx="500" cy="378" rx="22" ry="22"/><ellipse cx="447" cy="391" rx="16" ry="16"/><ellipse cx="476" cy="410" rx="15" ry="15"/><ellipse cx="466" cy="340" rx="14" ry="14"/><ellipse cx="455" cy="503" rx="20" ry="22"/><ellipse cx="447" cy="533" rx="15" ry="15"/><ellipse cx="420" cy="506" rx="13" ry="14"/><ellipse cx="12" cy="692" rx="25" ry="25"/><ellipse cx="10" cy="760" rx="20" ry="22"/><ellipse cx="378" cy="707" rx="22" ry="35"/><ellipse cx="376" cy="655" rx="10" ry="10"/><ellipse cx="403" cy="675" rx="10" ry="10"/><ellipse cx="515" cy="609" rx="20" ry="20"/><ellipse cx="552" cy="611" rx="15" ry="15"/><ellipse cx="503" cy="643" rx="18" ry="18"/><ellipse cx="486" cy="592" rx="15" ry="15"/><ellipse cx="478" cy="790" rx="30" ry="30"/></g>
<path d="M186,800 C186,740 194,700 204,668 C208,700 216,716 240,730 C236,760 240,790 246,800 Z" fill="#030303" filter="url(#bh)"/>
<g filter="url(#bb)"><path d="M184,800 C184,730 194,690 203,665" fill="none" stroke="#5a5a5a" stroke-width="2.5"/><ellipse cx="251" cy="640" rx="36" ry="46" fill="#000" stroke="#444" stroke-width="3"/><ellipse cx="149" cy="642" rx="8" ry="8" fill="#000"/></g>
<path d="M142,800 C146,740 146,690 150,640 C152,620 160,610 172,606" fill="none" stroke="#777" stroke-width="26" stroke-dasharray="3 5 4 5 3 6" filter="url(#bb)" opacity="0.85"/>
<g fill="none" stroke="#767676" stroke-width="2.6" filter="url(#bb)"><ellipse cx="168" cy="35" rx="96" ry="93"/><ellipse cx="0" cy="130" rx="66" ry="70"/><ellipse cx="80" cy="241" rx="62" ry="66"/><ellipse cx="325" cy="215" rx="64" ry="78"/><ellipse cx="510" cy="15" rx="76" ry="65"/><ellipse cx="545" cy="222" rx="80" ry="75"/><ellipse cx="0" cy="370" rx="58" ry="58"/><ellipse cx="156" cy="376" rx="57" ry="63"/><ellipse cx="85" cy="533" rx="55" ry="58"/><ellipse cx="296" cy="448" rx="53" ry="58"/><ellipse cx="494" cy="374" rx="64" ry="62"/><ellipse cx="449" cy="509" rx="57" ry="54"/><ellipse cx="0" cy="720" rx="66" ry="95"/><ellipse cx="380" cy="694" rx="55" ry="60"/><ellipse cx="515" cy="611" rx="56" ry="60"/><ellipse cx="485" cy="810" rx="70" ry="75"/><ellipse cx="600" cy="805" rx="40" ry="45"/><path d="M131,800 C136,740 136,690 140,633 C144,610 150,600 160,597 C180,590 200,586 210,582 C222,575 230,563 252,560 C272,560 290,572 297,592 C304,612 302,640 291,665 C280,684 256,706 226,719 C214,712 206,690 203,665 C194,690 184,730 184,800 Z"/></g>
</svg>
<svg class="a" style="left:0;top:0" width="620" height="936"><polygon points="16,901.5 30,911.5 16,921.5" fill="#444"/></svg>
<div class="a" style="left:327px;top:902px;width:279px;height:20px;border-radius:10px;background:#e4e4e4"></div>
</div>

<!-- job dialog -->
<div class="a" id="job" style="z-index:5;left:796px;top:372px;width:362px;height:389px;background:#ececec;border-radius:14px;overflow:hidden">
<div class="a" style="left:0;top:0;width:362px;height:56px;background:#efefee;border-bottom:1.5px solid #d2d2d2"></div>
<div class="a" style="left:16px;top:16px;width:24px;height:24px;border-radius:50%;background:#ee6a5e;border:1px solid #d6544a"></div>
<div class="a" style="left:56px;top:16px;width:24px;height:24px;border-radius:50%;background:#d7d7d6;border:1px solid #b8b8b8"></div>
<div class="a" style="left:96px;top:16px;width:24px;height:24px;border-radius:50%;background:#5fc454;border:1px solid #4aa83f"></div>
<div class="a" id="jtitle" style="left:139px;top:12px;font-weight:bold;font-size:26px;line-height:30px;color:#4a4a4a;letter-spacing:0.5px">Job Setup</div>
<div class="a" id="sel" style="left:42px;top:101px;font-size:26px;line-height:30px;color:#1e1e1e;letter-spacing:0.37px">Select a Job Type</div>
<div class="a" style="left:64px;top:138px;width:34px;height:34px;border-radius:50%;background:#a9c8ef"></div>
<div class="a" style="left:67px;top:141px;width:28px;height:28px;border-radius:50%;background:#eaf2fc;border:1.5px solid #7aa4d6"></div>
<div class="a" style="left:73.5px;top:147.5px;width:15px;height:15px;border-radius:50%;background:#4a92e4"></div>
<div class="a" style="left:66.5px;top:180.5px;width:29px;height:29px;border-radius:50%;background:#fff;border:2px solid #a4a4a4"></div>
<div class="a" style="left:66.5px;top:220.5px;width:29px;height:29px;border-radius:50%;background:#fff;border:2px solid #a4a4a4"></div>
<div class="a" style="left:66.5px;top:260.5px;width:29px;height:29px;border-radius:50%;background:#fff;border:2px solid #a4a4a4"></div>
<div class="a" id="r1" style="letter-spacing:-0.3px;left:105px;top:139px;font-size:28px;line-height:32px;color:#1e1e1e">mesmer</div>
<div class="a" id="r2" style="letter-spacing:0.25px;left:105px;top:180px;font-size:28px;line-height:32px;color:#1e1e1e">segmentation</div>
<div class="a" id="r3" style="left:105px;top:220px;font-size:28px;line-height:32px;color:#1e1e1e">caliban</div>
<div class="a" id="r4" style="left:105px;top:260px;font-size:28px;line-height:32px;color:#1e1e1e">polaris</div>
<div class="a" style="left:32.5px;top:325px;width:143px;height:42px;background:#fff;border:1.5px solid #c2c2c2;border-radius:5px"></div>
<div class="a" style="left:186.5px;top:325px;width:143px;height:42px;background:#fff;border:1.5px solid #c2c2c2;border-radius:5px"></div>
<div class="a" id="bc" style="letter-spacing:0.5px;left:62px;top:331.5px;font-size:26px;line-height:30px;color:#1e1e1e">Cancel</div>
<div class="a" id="bo" style="letter-spacing:-1px;left:240px;top:331.5px;font-size:26px;line-height:30px;color:#1e1e1e">OK</div>
</div>

</body></html>
